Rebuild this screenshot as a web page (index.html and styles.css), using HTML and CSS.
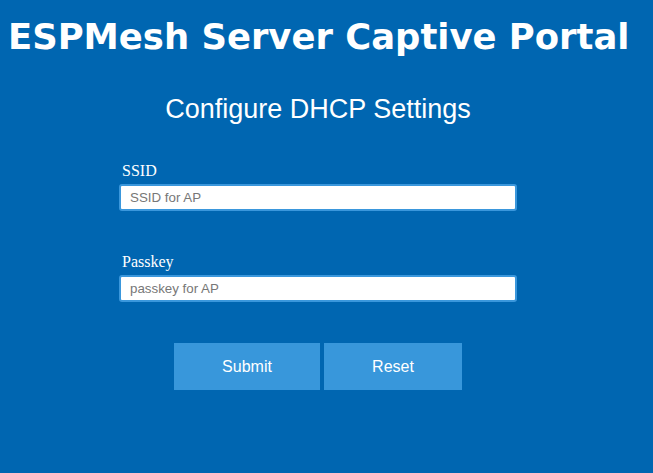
FILE: index.html
```html
<!DOCTYPE html>
<html>
<head>
<meta charset="utf-8">
<link rel="stylesheet" href="styles.css">
</head>
<body>
<h1 class="title">ESPMesh Server Captive Portal</h1>
<div class="panel">
  <h2 class="subtitle">Configure DHCP Settings</h2>
  <form class="form">
    <div class="field">
      <label class="label" for="ssid">SSID</label>
      <input class="input" id="ssid" type="text" placeholder="SSID for AP">
    </div>
    <div class="field">
      <label class="label" for="pass">Passkey</label>
      <input class="input" id="pass" type="text" placeholder="passkey for AP">
    </div>
    <div class="buttons">
      <button class="btn btn-submit" type="button">Submit</button>
      <button class="btn btn-reset" type="button">Reset</button>
    </div>
  </form>
</div>
</body>
</html>
```
FILE: styles.css
```css
html, body {
  margin: 0;
  padding: 0;
  background: #0066b1;
  height: 100%;
}
body {
  color: #ffffff;
  font-family: "Liberation Sans", Arial, sans-serif;
}
.title {
  margin: 0;
  padding: 15px 0 0 8px;
  font-family: "DejaVu Sans", Verdana, sans-serif;
  font-weight: bold;
  font-size: 35.4px;
  line-height: 44px;
  white-space: nowrap;
}
.panel {
  width: 636px;
  display: flex;
  flex-direction: column;
  align-items: center;
}
.subtitle {
  margin: 35px 0 0;
  font-weight: normal;
  font-size: 27px;
  line-height: 30px;
}
.form {
  width: 398px;
  margin-top: 37px;
  display: flex;
  flex-direction: column;
}
.field {
  display: flex;
  flex-direction: column;
  margin-bottom: 41px;
}
.label {
  font-family: "Liberation Serif", "Times New Roman", serif;
  font-size: 16px;
  line-height: 20px;
  padding-left: 3px;
  margin-bottom: 3px;
}
.input {
  box-sizing: border-box;
  width: 398px;
  height: 27px;
  margin: 0;
  border: 2px solid #3a97dc;
  border-radius: 3px;
  background: #ffffff;
  padding: 0 9px;
  font-family: "Liberation Sans", Arial, sans-serif;
  font-size: 13.333px;
  color: #333;
  outline: none;
}
.input::placeholder {
  color: #777777;
}
.buttons {
  display: flex;
  justify-content: center;
  gap: 4px;
  margin-top: 0;
}
.btn {
  height: 47px;
  border: none;
  margin: 0;
  background: #3897db;
  color: #ffffff;
  font-family: "Liberation Sans", Arial, sans-serif;
  font-size: 16px;
  cursor: pointer;
}
.btn-submit { width: 146px; }
.btn-reset { width: 138px; }
```
